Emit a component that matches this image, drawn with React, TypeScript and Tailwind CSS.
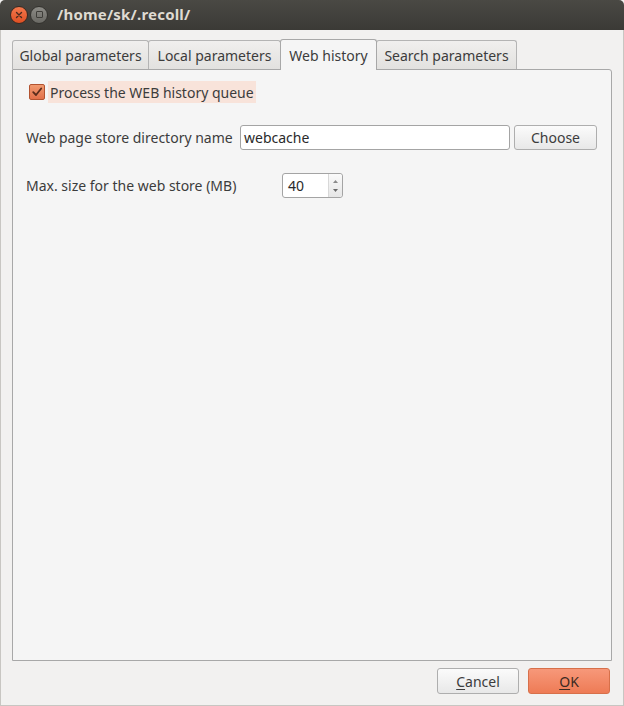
import React from 'react';

const tabs = [
  { label: 'Global parameters', w: 'w-[137px]' },
  { label: 'Local parameters', w: 'w-[133px]' },
  { label: 'Web history', w: 'w-[97px]' },
  { label: 'Search parameters', w: 'w-[141px]' },
];

export default function App() {
  const active = 2;

  return (
    <div
      className="w-[624px] h-[706px] flex flex-col bg-[#f2f1f0] text-[#3c3c3c] overflow-hidden"
      style={{ fontFamily: '"Noto Sans", "DejaVu Sans", sans-serif' }}
    >
      {/* title bar */}
      <div className="h-[30px] shrink-0 flex items-center bg-gradient-to-b from-[#4a4944] to-[#3b3a36] rounded-t-[5px] pl-[10px] pb-[1px]">
        <div className="w-[18px] h-[18px] rounded-full bg-gradient-to-b from-[#f4784c] to-[#de4f22] flex items-center justify-center border border-[#3a2a22]">
          <svg width="8" height="8" viewBox="0 0 8 8">
            <path d="M1.5 1.5 L6.5 6.5 M6.5 1.5 L1.5 6.5" stroke="#4a2a1e" strokeWidth="1.4" strokeLinecap="round" />
          </svg>
        </div>
        <div className="ml-[2px] w-[18px] h-[18px] rounded-full bg-gradient-to-b from-[#8c8b86] to-[#6a6964] flex items-center justify-center border border-[#34332f]">
          <div className="w-[7px] h-[7px] border border-[#3e3d39] rounded-[1px]" />
        </div>
        <div className="ml-[9px] text-[15px] font-bold text-[#dfdbd2] tracking-[0.2px]">/home/sk/.recoll/</div>
      </div>

      {/* body */}
      <div className="flex-1 flex flex-col border-x border-b border-[#c8c6c2] px-[11px]">
        <div className="flex items-end h-[39px] pt-[8px]">
          {tabs.map((t, i) =>
            i === active ? (
              <div
                key={t.label}
                className={`${t.w} h-[31px] -ml-px flex items-center justify-center text-[14px] text-[#3c3c3c] bg-[#f5f5f5] border border-b-0 border-[#a8a8a8] rounded-t-[3px] relative z-10 -mb-px`}
              >
                {t.label}
              </div>
            ) : (
              <div
                key={t.label}
                className={`${t.w} h-[29px] flex items-center justify-center text-[14px] text-[#3c3c3c] bg-gradient-to-b from-[#f0efee] to-[#e2e1df] border border-[#b4b4b4] border-b-0 rounded-t-[3px] -ml-px first:ml-0`}
              >
                {t.label}
              </div>
            ),
          )}
        </div>

        <div className="h-[592px] border border-[#a8a8a8] bg-[#f5f5f5] rounded-tr-[3px] flex flex-col px-[13px]">
          <div className="mt-[11px] flex items-center">
            <div className="w-[16px] h-[16px] ml-[3px] rounded-[2px] bg-gradient-to-b from-[#f09a70] to-[#e2704a] border border-[#b25330] flex items-center justify-center">
              <svg width="12" height="12" viewBox="0 0 12 12">
                <path d="M2.2 6.2 L5 9 L10.2 2.5" fill="none" stroke="#5a2c1c" strokeWidth="1.8" strokeLinecap="round" strokeLinejoin="round" />
              </svg>
            </div>
            <div className="ml-[3px] h-[22px] px-[2px] flex items-center bg-[#f8e3da] text-[14px] text-[#3c3c3c]">
              Process the WEB history queue
            </div>
          </div>

          <div className="mt-[22px] flex items-center h-[25px]">
            <div className="text-[14px] w-[214px] shrink-0">Web page store directory name</div>
            <div className="w-[270px] h-[25px] bg-white border border-[#a4a4a4] rounded-[3px] flex items-center px-[3px] text-[14px] text-[#2a2a2a]">
              webcache
            </div>
            <div className="ml-[4px] w-[83px] h-[25px] rounded-[3px] border border-[#aeaeae] bg-gradient-to-b from-[#fbfbfb] to-[#e8e8e8] flex items-center justify-center text-[14px]">
              Choose
            </div>
          </div>

          <div className="mt-[23px] flex items-center h-[25px]">
            <div className="text-[14px] w-[256px] shrink-0">Max. size for the web store (MB)</div>
            <div className="w-[61px] h-[25px] bg-white border border-[#a4a4a4] rounded-[3px] flex">
              <div className="flex-1 flex items-center px-[5px] text-[14px] text-[#2a2a2a]">40</div>
              <div className="w-[14px] border-l border-[#d8d8d8] bg-gradient-to-b from-[#fafafa] to-[#e6e6e6] rounded-r-[3px] flex flex-col items-center justify-center gap-[6px]">
                <svg width="5" height="3" viewBox="0 0 5 3"><path d="M0 3 L2.5 0 L5 3 Z" fill="#8a8a8a" /></svg>
                <svg width="5" height="3" viewBox="0 0 5 3"><path d="M0 0 L2.5 3 L5 0 Z" fill="#6a6a6a" /></svg>
              </div>
            </div>
          </div>
        </div>

        <div className="flex justify-end gap-[9px] mt-[7px] mr-[2px]">
          <div className="w-[82px] h-[26px] rounded-[3px] border border-[#aeaeae] bg-gradient-to-b from-[#fbfbfb] to-[#e8e8e8] flex items-center justify-center text-[14px]">
            <span><span className="underline underline-offset-2">C</span>ancel</span>
          </div>
          <div className="w-[82px] h-[26px] rounded-[3px] border border-[#d7704a] bg-gradient-to-b from-[#f7987a] to-[#ee7b55] flex items-center justify-center text-[14px] text-[#3c2a22]">
            <span><span className="underline underline-offset-2">O</span>K</span>
          </div>
        </div>
      </div>
    </div>
  );
}
